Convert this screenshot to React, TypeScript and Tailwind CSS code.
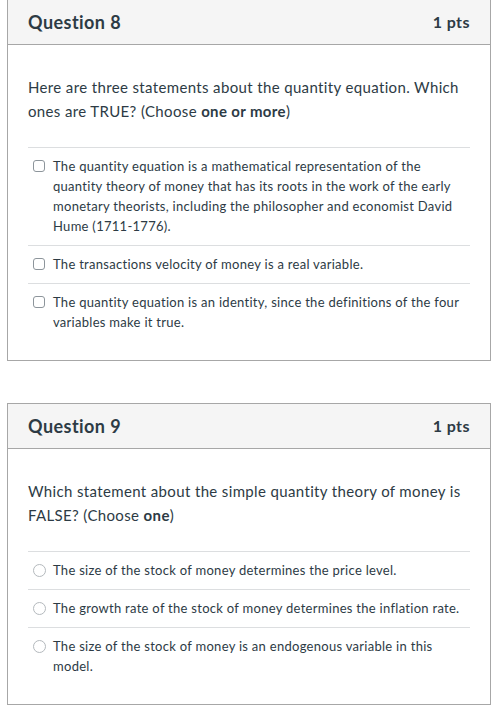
import React from "react";

type Question = {
  number: number;
  points: string;
  prompt: React.ReactNode;
  kind: "checkbox" | "radio";
  answers: string[];
};

const questions: Question[] = [
  {
    number: 8,
    points: "1 pts",
    prompt: (
      <>
        Here are three statements about the quantity equation. Which ones are TRUE? (Choose{" "}
        <strong className="font-bold">one or more</strong>)
      </>
    ),
    kind: "checkbox",
    answers: [
      "The quantity equation is a mathematical representation of the quantity theory of money that has its roots in the work of the early monetary theorists, including the philosopher and economist David Hume (1711-1776).",
      "The transactions velocity of money is a real variable.",
      "The quantity equation is an identity, since the definitions of the four variables make it true.",
    ],
  },
  {
    number: 9,
    points: "1 pts",
    prompt: (
      <>
        Which statement about the simple quantity theory of money is FALSE? (Choose{" "}
        <strong className="font-bold">one</strong>)
      </>
    ),
    kind: "radio",
    answers: [
      "The size of the stock of money determines the price level.",
      "The growth rate of the stock of money determines the inflation rate.",
      "The size of the stock of money is an endogenous variable in this model.",
    ],
  },
];

function QuestionCard({ q, className }: { q: Question; className?: string }) {
  const isCheckbox = q.kind === "checkbox";
  return (
    <div className={`border border-[#a7a7a7] bg-white ${className ?? ""}`}>
      {/* Header */}
      <div className="h-[45px] flex items-center justify-between px-5 bg-[#f5f5f5] border-b border-[#a7a7a7] tracking-[0.028em]">
        <h2 className="text-[18px] font-bold text-[#2d3b45]">Question {q.number}</h2>
        <span className="text-[16px] font-bold text-[#2d3b45]">{q.points}</span>
      </div>

      {/* Body */}
      <div className="px-5 pt-[30px] pb-[19px]">
        <p className="text-[15px] leading-6 text-[#2d3b45] mb-6 tracking-[0.024em]">{q.prompt}</p>
        <div className="flex flex-col">
          {q.answers.map((a) => (
            <label
              key={a}
              className={`flex items-start border-t border-[#dcdee0] pl-[5px] pt-2 pb-[9px] ${
                isCheckbox ? "gap-2" : "gap-[7px]"
              }`}
            >
              {isCheckbox ? (
                <span className="mt-1 size-3 shrink-0 rounded-[3px] border border-[#8d959b] bg-white" />
              ) : (
                <span className="mt-[4px] size-[13px] shrink-0 rounded-full border border-[#b4b9bd] bg-white" />
              )}
              <span className="text-[13px] leading-5 text-[#2d3b45] tracking-[0.022em]">{a}</span>
            </label>
          ))}
        </div>
      </div>
    </div>
  );
}

export default function App() {
  return (
    <div
      className="w-[492px] min-h-[706px] bg-white pl-[7px] pr-[1px]"
      style={{ fontFamily: "Lato, 'Noto Sans', sans-serif" }}
    >
      <QuestionCard q={questions[0]} className="-mt-px" />
      <QuestionCard q={questions[1]} className="mt-[42px]" />
    </div>
  );
}
